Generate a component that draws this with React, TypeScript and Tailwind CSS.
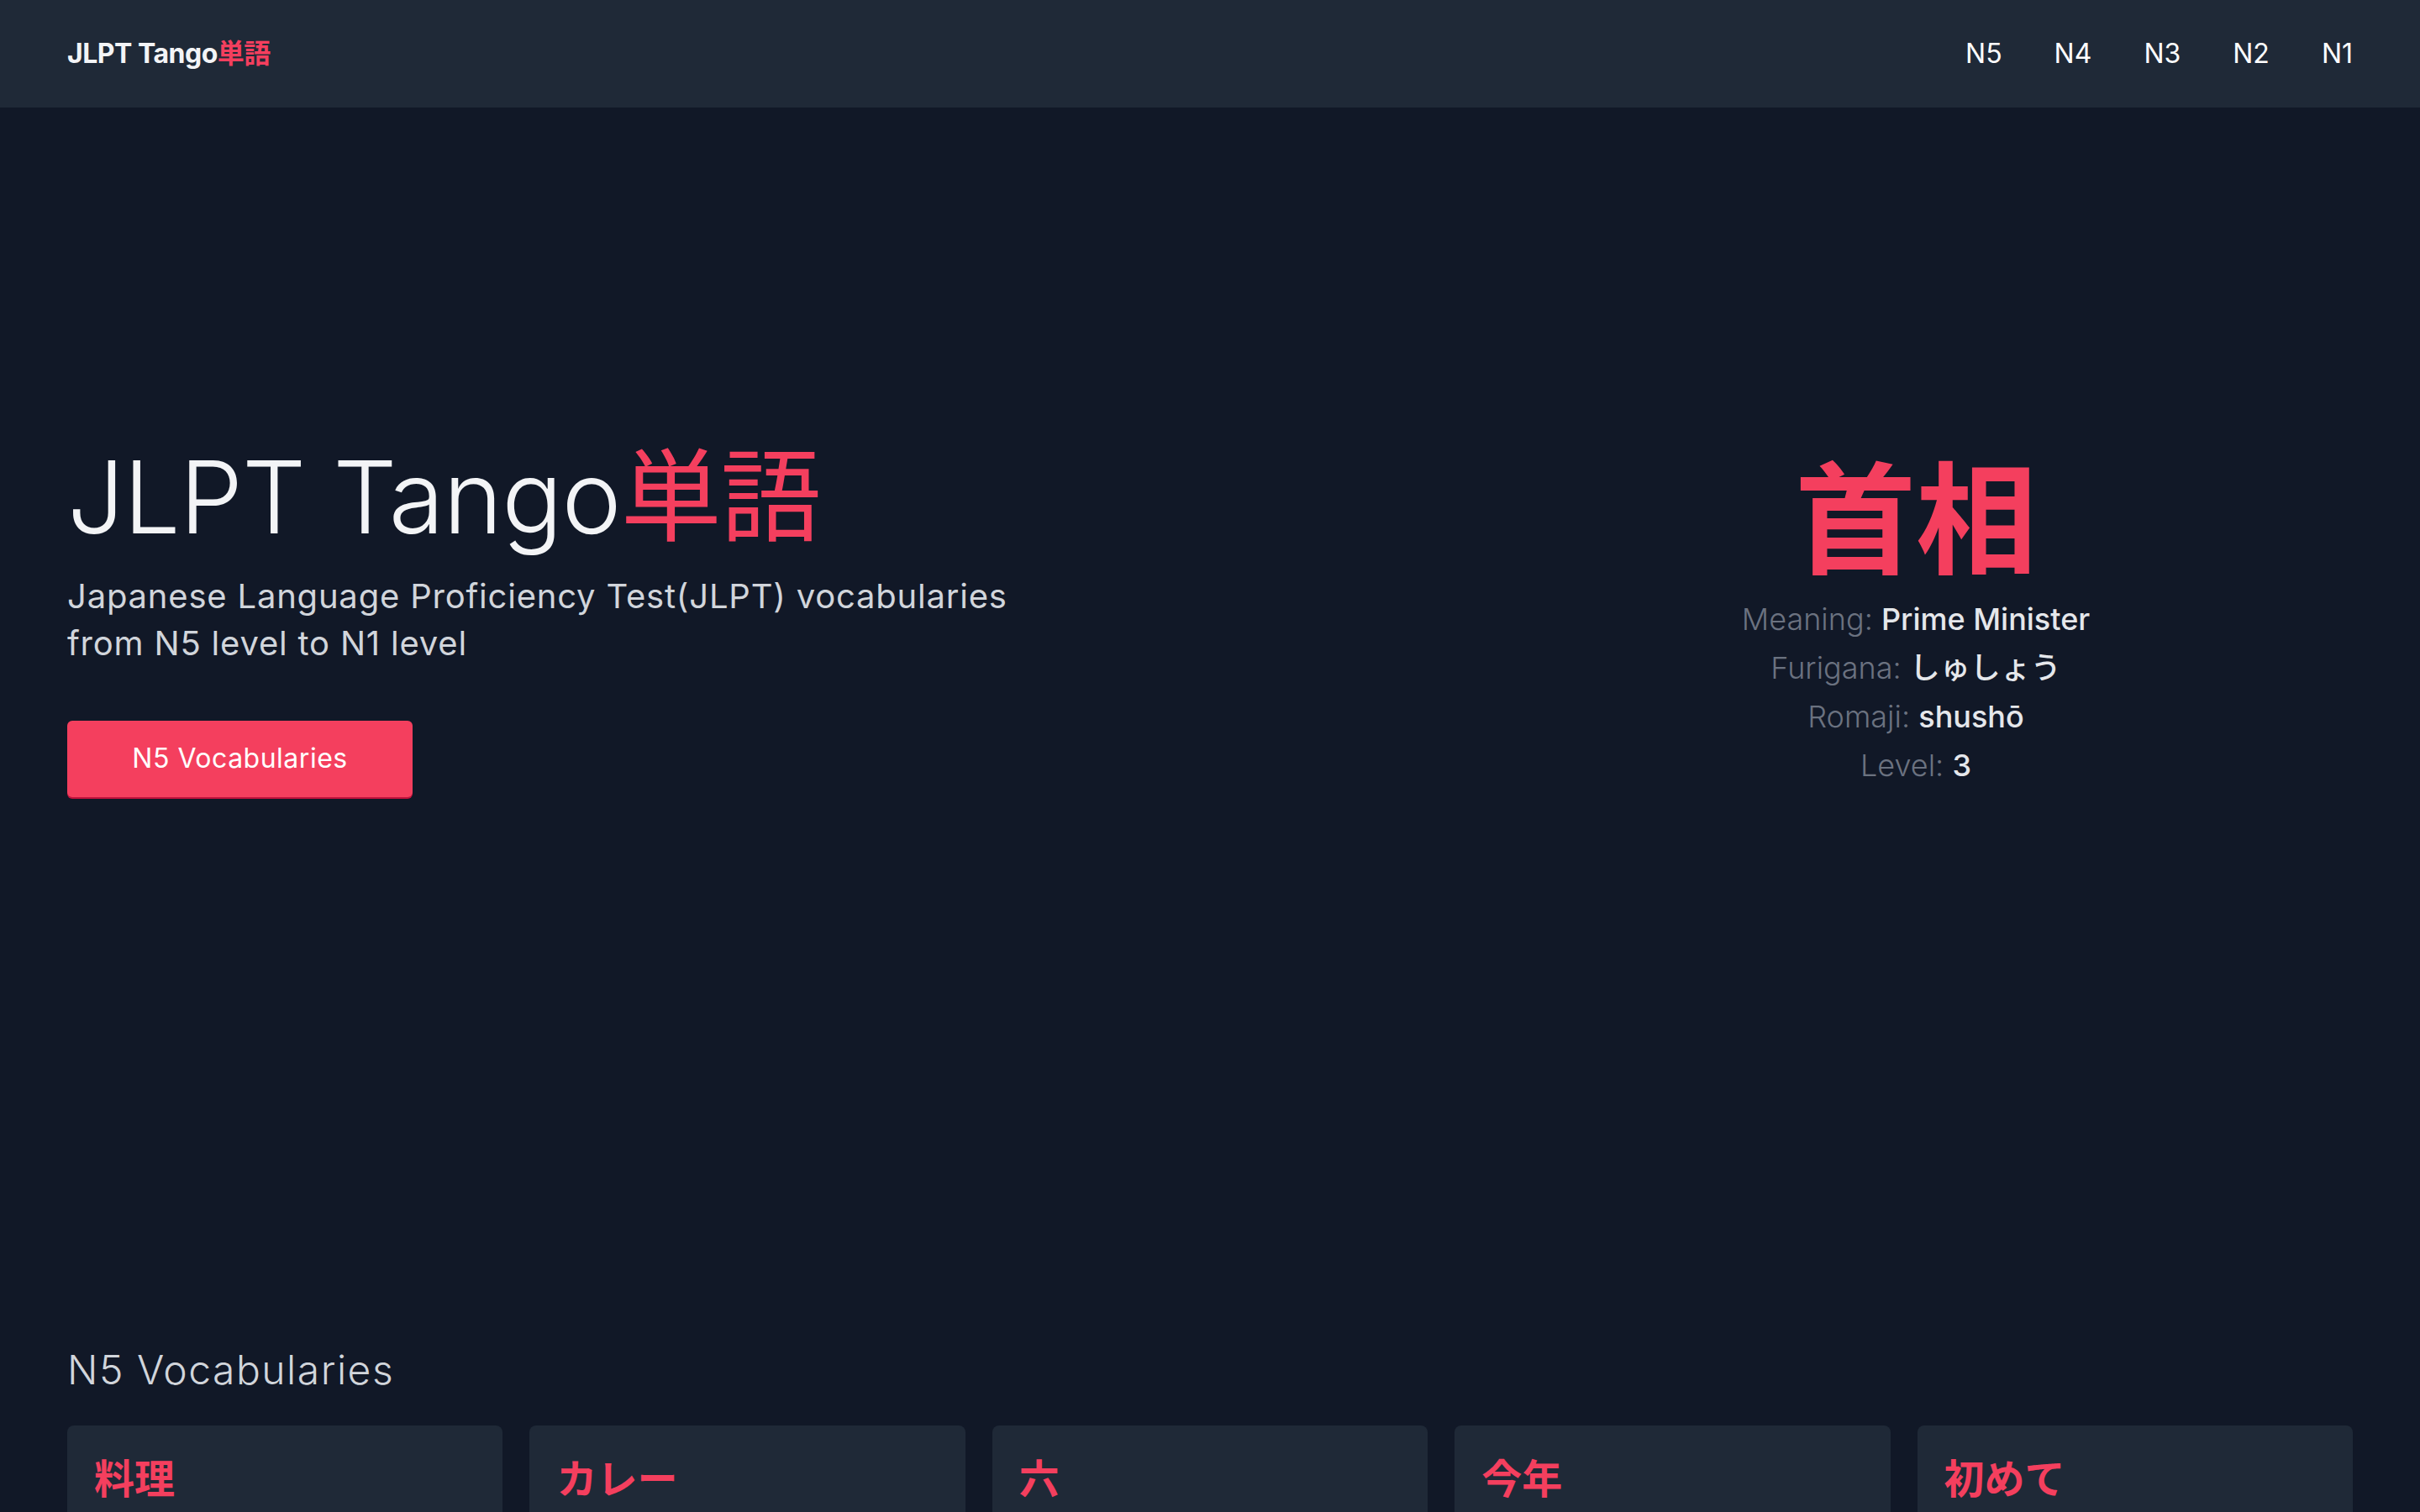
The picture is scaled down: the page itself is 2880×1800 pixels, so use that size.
import React from "react";

const font = { fontFamily: "Inter, 'Noto Sans CJK JP', sans-serif" };

const levels = ["N5", "N4", "N3", "N2", "N1"];

const cards = [
  { word: "料理", meaning: "cooking" },
  { word: "カレー", meaning: "curry" },
  { word: "六", meaning: "six" },
  { word: "今年", meaning: "this year" },
  { word: "初めて", meaning: "for the first time" },
];

function Detail({ label, value }: { label: string; value: string }) {
  return (
    <p className="text-[36px] leading-[58px]">
      <span className="font-light text-[#6b7280]">{label}: </span>
      <span className="font-medium text-[#e5e7eb]">{value}</span>
    </p>
  );
}

export default function App() {
  return (
    <div className="min-h-screen bg-[#111827]" style={font}>
      <nav className="flex h-[128px] items-center justify-between bg-[#1f2937] px-[80px]">
        <a className="text-[32px] font-bold tracking-[-0.5px] text-[#f3f4f6]">
          JLPT Tango<span className="text-[#f43f5e]">単語</span>
        </a>
        <ul className="flex items-center gap-[62px]">
          {levels.map((l) => (
            <li key={l} className="text-[32px] leading-[48px] text-white">
              {l}
            </li>
          ))}
        </ul>
      </nav>

      <section className="grid h-[1224px] grid-cols-[1fr_1040px] items-center px-[80px]">
        <div className="flex flex-col">
          <h1 className="text-[120px] font-light leading-[120px] tracking-[-1px] text-[#f3f4f6]">
            JLPT Tango<span className="font-normal text-[#f43f5e]">単語</span>
          </h1>
          <p className="mt-[30px] max-w-[1200px] text-[40px] leading-[56px] tracking-[0.8px] text-[#d1d5db]">
            Japanese Language Proficiency Test(JLPT) vocabularies from N5 level to N1 level
          </p>
          <div className="mt-[64px]">
            <button className="h-[91px] w-[411px] rounded-[6px] bg-[#f43f5e] text-[32px] tracking-[0.5px] text-white shadow-[0_2px_0_#be123c]">
              N5 Vocabularies
            </button>
          </div>
        </div>
        <div className="flex flex-col items-center text-center">
          <h2 className="text-[144px] font-bold leading-[160px] text-[#f43f5e]">首相</h2>
          <div className="mt-[8px] flex flex-col items-center">
            <Detail label="Meaning" value="Prime Minister" />
            <Detail label="Furigana" value="しゅしょう" />
            <Detail label="Romaji" value="shushō" />
            <Detail label="Level" value="3" />
          </div>
        </div>
      </section>

      <section className="px-[80px] pb-[80px] pt-[247px]">
        <h3 className="text-[48px] font-light leading-[64px] tracking-[1.5px] text-[#d1d5db]">N5 Vocabularies</h3>
        <div className="mt-[34px] grid grid-cols-5 gap-[32px]">
          {cards.map((c) => (
            <div key={c.word} className="rounded-[8px] bg-[#1f2937] p-[32px]">
              <p className="text-[48px] font-bold leading-[64px] text-[#f43f5e]">{c.word}</p>
              <p className="mt-[16px] text-[32px] text-[#9ca3af]">{c.meaning}</p>
            </div>
          ))}
        </div>
      </section>
    </div>
  );
}
